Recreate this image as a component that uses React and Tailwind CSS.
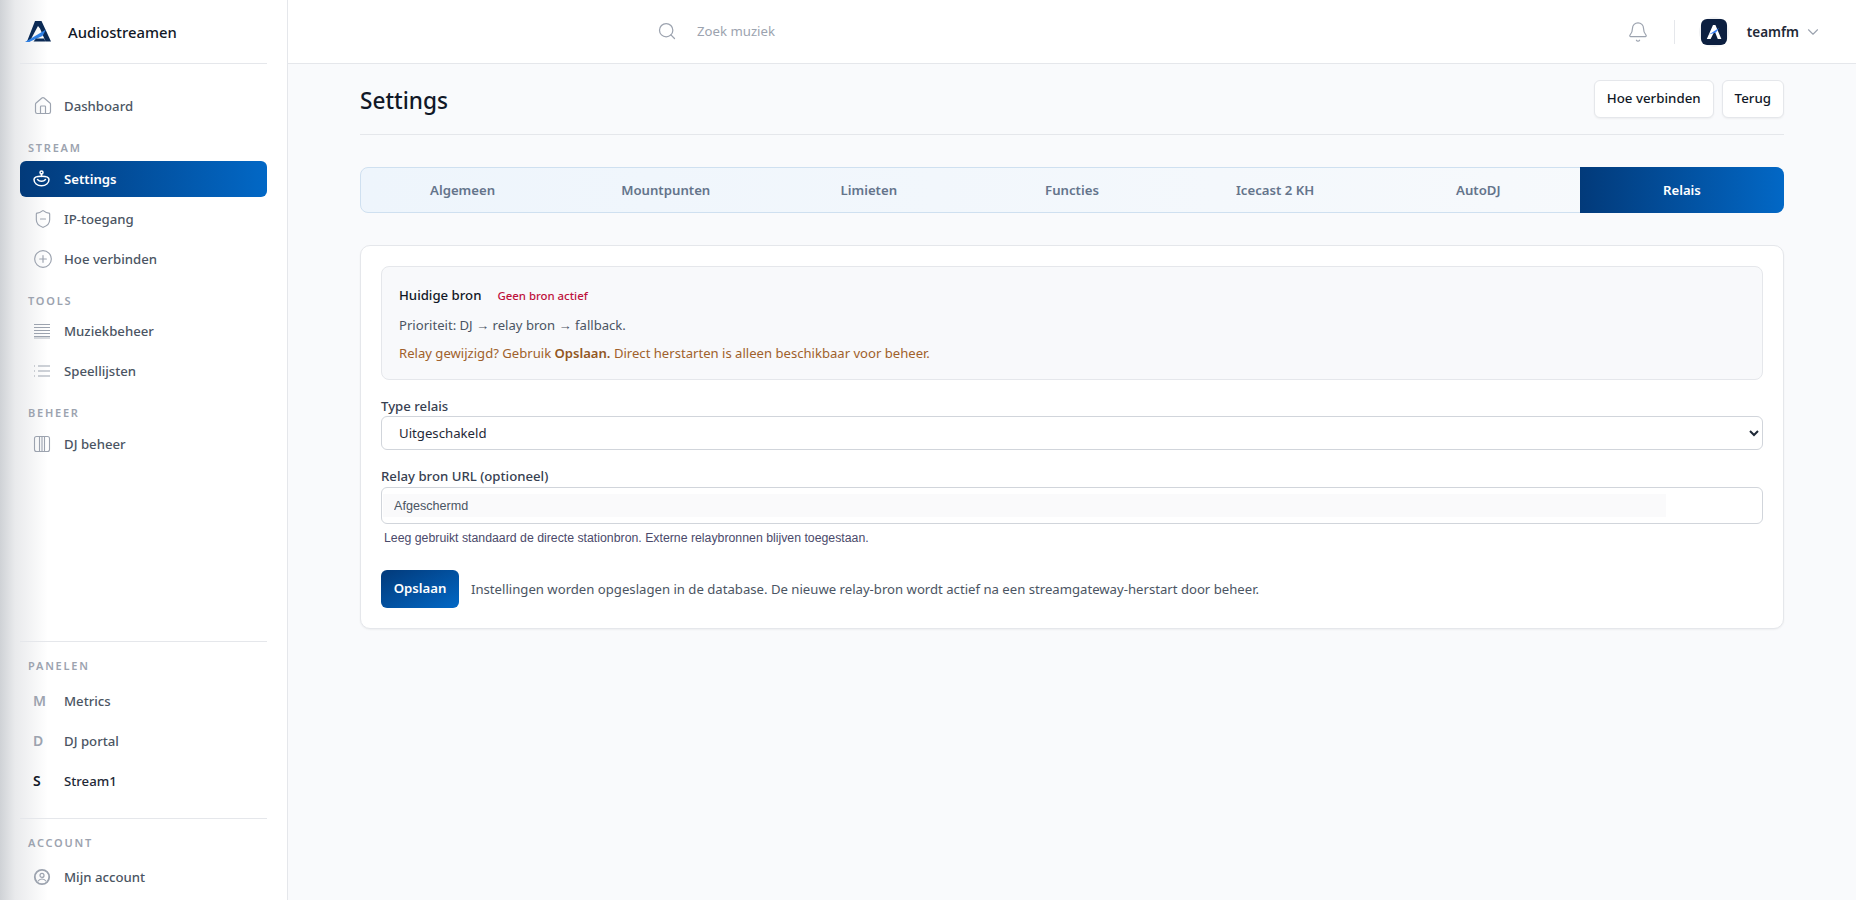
import React from 'react';
import { Bell, ChevronDown, CirclePlus, Home, Search, ShieldMinus } from 'lucide-react';

const Label = ({ children, className = '' }) => (
  <div className={`pl-2 text-[11px] leading-4 font-semibold tracking-[0.16em] text-[#9ca3af] ${className}`}>{children}</div>
);

const CupIcon = () => (
  <svg width="18" height="18" viewBox="0 0 18 18" fill="none" stroke="currentColor" strokeWidth="1.5" strokeLinecap="round" strokeLinejoin="round">
    <circle cx="8.5" cy="2.500" r="1.500" />
    <path d="M8.500 4v2.500" />
    <path d="M1 9.500c0-2 3.200-3.200 7.500-3.200s7.500 1.200 7.500 3.200c0 3.600-3.200 6.300-7.500 6.300S1 13.100 1 9.500Z" />
    <path d="M4.500 9.500c1 1.200 2.400 1.800 4 1.800s3-.6 4-1.800" />
  </svg>
);

const LinesIcon = () => (
  <svg width="18" height="18" viewBox="0 0 18 18" fill="none" stroke="currentColor" strokeWidth="1.1">
    <path d="M1 2.500h16M1 5.500h16M1 8.500h16M1 11.500h16M1 14.500h16" />
    <path d="M1 16h16" strokeWidth="0.8" />
  </svg>
);

const ListIcon = () => (
  <svg width="18" height="18" viewBox="0 0 18 18" fill="none" stroke="currentColor" strokeWidth="1.1">
    <path d="M5 4h12M5 9h12M5 14h12" />
    <path d="M1 4h1.400M1 9h1.400M1 14h1.400" strokeDasharray="1 1" />
  </svg>
);

const ColumnsIcon = () => (
  <svg width="18" height="18" viewBox="0 0 18 18" fill="none" stroke="currentColor" strokeWidth="1.1">
    <rect x="1.500" y="1.500" width="15" height="15" rx="2" />
    <path d="M6.500 1.500v15M9 1.500v15M11.500 1.500v15" />
  </svg>
);

const AccountIcon = () => (
  <svg width="18" height="18" viewBox="0 0 18 18" fill="none" stroke="currentColor" strokeWidth="1.8">
    <circle cx="9" cy="9" r="7.200" />
    <circle cx="9" cy="7.400" r="2" strokeWidth="1.200" />
    <path d="M5 13.200c.8-1.500 2.200-2.200 4-2.200s3.200.7 4 2.200" strokeWidth="1.200" />
  </svg>
);

const Logo = () => (
  <svg width="28" height="22" viewBox="0 0 28 22">
    <path d="M10 0h6.500l9.500 20.500h-5.500l-5.500-13-2-2.500-6.500 12-1.500 3.500H2Z" fill="#0b2a55" />
    <path d="M0 21 21 8.500l-3.500 6.500L4 21Z" fill="#2f80e4" />
    <path d="M11 17.500h8l1.500 3H8.500Z" fill="#0b2a55" />
  </svg>
);

const Avatar = () => (
  <div className="flex items-center justify-center w-[30px] h-[30px] rounded-full bg-[#f1f2f4] shrink-0">
    <div className="flex items-center justify-center w-[26px] h-[26px] rounded-[6px] bg-[#0c1f40]">
      <svg width="20" height="20" viewBox="0 0 20 20">
        <path d="M9 3h2.400l6 14h-3.600l-3.200-8-4 8H2.800Z" fill="#ffffff" />
        <path d="M5 12.500 15 6l-3 4.500Z" fill="#3b82f6" />
      </svg>
    </div>
  </div>
);

const NavItem = ({ icon, children, active, dark }) => (
  <div className={`flex items-center h-9 mb-1 rounded-[6px] pl-[13px] text-[13.2px] font-medium ${active ? 'bg-linear-to-r from-[#023a7a] to-[#0268c6] text-white font-semibold' : dark ? 'text-[#1f2937]' : 'text-[#4b5563]'}`}>
    <span className={`flex items-center w-[31px] shrink-0 ${active ? 'text-white' : 'text-[#9ca3af]'}`}>{icon}</span>
    <span className="pt-px">{children}</span>
  </div>
);

const Letter = ({ children, dark }) => (
  <span className={`-mt-0.5 text-[14px] font-semibold ${dark ? 'text-[#111827]' : 'text-[#9ca3af]'}`}>{children}</span>
);

const Sidebar = () => (
  <aside className="flex flex-col w-[288px] shrink-0 h-full border-r border-[#e5e7eb] bg-[linear-gradient(90deg,#cfd2d6,#e9eaec_15px,#ffffff_48px)]">
    <div className="flex items-center gap-[15px] h-[64px] mx-5 pl-[5px] border-b border-[#e5e7eb] shrink-0">
      <Logo />
      <span className="pt-px text-[14.8px] font-medium text-[#111827]">Audiostreamen</span>
    </div>
    <nav className="px-5 pt-6">
      <NavItem icon={<Home size={20} strokeWidth={1.4} />}>Dashboard</NavItem>
      <Label className="mt-4 mb-[5px]">STREAM</Label>
      <NavItem active icon={<CupIcon />}>Settings</NavItem>
      <NavItem icon={<ShieldMinus size={20} strokeWidth={1.4} />}>IP-toegang</NavItem>
      <NavItem icon={<CirclePlus size={20} strokeWidth={1.4} />}>Hoe verbinden</NavItem>
      <Label className="mt-4 mb-1">TOOLS</Label>
      <NavItem icon={<LinesIcon />}>Muziekbeheer</NavItem>
      <NavItem icon={<ListIcon />}>Speellijsten</NavItem>
      <Label className="mt-4 mb-[5px]">BEHEER</Label>
      <NavItem icon={<ColumnsIcon />}>DJ beheer</NavItem>
    </nav>
    <div className="mt-auto px-5">
      <div className="border-t border-[#e5e7eb] pt-4 pb-[15px]">
        <Label className="mb-[9px]">PANELEN</Label>
        <NavItem icon={<Letter>M</Letter>}>Metrics</NavItem>
        <NavItem icon={<Letter>D</Letter>}>DJ portal</NavItem>
        <NavItem dark icon={<Letter dark>S</Letter>}>Stream1</NavItem>
      </div>
      <div className="border-t border-[#e5e7eb] pt-4 pb-px">
        <Label className="mb-2">ACCOUNT</Label>
        <NavItem icon={<AccountIcon />}>Mijn account</NavItem>
      </div>
    </div>
  </aside>
);

const TopBar = () => (
  <header className="flex items-center h-[64px] shrink-0 bg-white border-b border-[#e5e7eb]">
    <div className="flex items-center gap-[20px] pl-[369px] text-[#9ca3af]">
      <Search size={20} strokeWidth={1.5} />
      <span className="pt-px text-[13.2px]">Zoek muziek</span>
    </div>
    <div className="flex items-center ml-auto pr-[34px]">
      <Bell size={22} strokeWidth={1.3} className="text-[#9ca3af]" />
      <div className="w-px h-[24px] bg-[#e5e7eb] ml-[25px] mr-[24px]" />
      <Avatar />
      <span className="pt-px ml-[18px] text-[13.5px] font-semibold text-[#1f2937]">teamfm</span>
      <ChevronDown size={18} strokeWidth={1.5} className="ml-[5px] text-[#9ca3af]" />
    </div>
  </header>
);

const tabs = ['Algemeen', 'Mountpunten', 'Limieten', 'Functies', 'Icecast 2 KH', 'AutoDJ', 'Relais'];

const Tabs = () => (
  <div className="grid grid-cols-7 h-[46px] mt-[32px] rounded-[8px] border border-[#cfe0f0] bg-linear-to-r from-[#eef5fc] to-[#f8fafc]">
    {tabs.map((t) => (
      <div
        key={t}
        className={
          t === 'Relais'
            ? 'flex items-center justify-center pt-px -my-px -mr-px rounded-r-[8px] text-[13.2px] font-semibold text-white bg-linear-to-r from-[#023a7a] to-[#0268c6]'
            : 'flex items-center justify-center pt-px text-[13.2px] font-semibold text-[#64748b]'
        }
      >
        {t}
      </div>
    ))}
  </div>
);

const Button = ({ children }) => (
  <button className="h-[38px] px-3 rounded-[6px] border border-[#e5e7eb] bg-white text-[13.3px] font-medium text-[#111827] shadow-xs">{children}</button>
);

const Form = () => (
  <section className="mt-[32px] p-5 rounded-[10px] border border-[#e5e7eb] bg-white shadow-xs">
    <div className="h-[114px] pl-[17px] pt-[19px] rounded-[8px] border border-[#e5e7eb] bg-[#f8f9fb]">
      <div className="flex items-center h-5">
        <span className="text-[13.2px] font-medium text-[#111827]">Huidige bron</span>
        <span className="ml-4 text-[11.4px] font-medium text-[#be123c]">Geen bron actief</span>
      </div>
      <p className="mt-[9px] text-[13.1px] leading-5 text-[#4b5563]">Prioriteit: DJ → relay bron → fallback.</p>
      <p className="mt-2 text-[13.1px] leading-5 text-[#a0612b]">
        Relay gewijzigd? Gebruik <strong className="font-semibold text-[#92571f]">Opslaan.</strong> Direct herstarten is alleen beschikbaar voor beheer.
      </p>
    </div>
    <label className="block mt-4 text-[13.2px] leading-5 font-medium text-[#374151]">Type relais</label>
    <select className="block w-full h-[34px] pl-[13px] pr-1 rounded-[6px] border border-[#d1d5db] bg-white text-[13.2px] text-[#1f2937]">
      <option>Uitgeschakeld</option>
    </select>
    <label className="block mt-4 text-[13.2px] leading-5 font-medium text-[#374151]">Relay bron URL (optioneel)</label>
    <div className="mt-px h-[37px] pl-[1px] pr-[96px] py-[6px] rounded-[6px] border border-[#d1d5db] bg-white">
      <input
        readOnly
        value="Afgeschermd"
        className="block w-full h-[23px] pl-[11px] bg-[#fafafb] text-[12.6px] text-[#4b5563] font-['Liberation_Sans',sans-serif] outline-none"
      />
    </div>
    <p className="mt-[6px] pl-[3px] text-[12.3px] leading-4 text-[#4b4a6b] font-['Liberation_Sans',sans-serif]">
      Leeg gebruikt standaard de directe stationbron. Externe relaybronnen blijven toegestaan.
    </p>
    <div className="flex items-center gap-3 mt-6">
      <button className="w-[78px] h-[38px] rounded-[6px] bg-linear-to-br from-[#023a7a] to-[#0268c6] text-[13.2px] font-semibold text-white">Opslaan</button>
      <span className="pt-px text-[13.15px] text-[#4b5563]">Instellingen worden opgeslagen in de database. De nieuwe relay-bron wordt actief na een streamgateway-herstart door beheer.</span>
    </div>
  </section>
);

export default function App() {
  return (
    <div className="flex h-[900px] overflow-hidden bg-[#f9fafc] font-['Noto_Sans',sans-serif]">
      <Sidebar />
      <div className="flex flex-col flex-1 min-w-0">
        <TopBar />
        <main className="pl-[72px] pr-[72px]">
          <div className="flex items-center justify-between h-[71px] border-b border-[#e5e7eb]">
            <h1 className="mt-[3px] text-[22.6px] font-medium text-[#111827]">Settings</h1>
            <div className="flex gap-2">
              <Button>Hoe verbinden</Button>
              <Button>Terug</Button>
            </div>
          </div>
          <Tabs />
          <Form />
        </main>
      </div>
    </div>
  );
}
